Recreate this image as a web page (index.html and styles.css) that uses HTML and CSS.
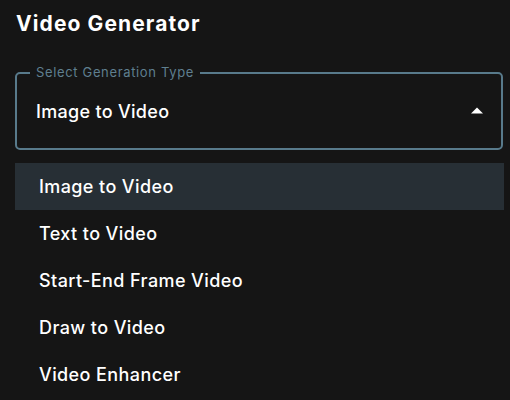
FILE: index.html
```html
<!DOCTYPE html>
<html lang="en">
<head>
<meta charset="utf-8">
<title>Video Generator</title>
<link rel="stylesheet" href="styles.css">
</head>
<body>
<div class="panel">
  <h1 class="title">Video Generator</h1>
  <div class="field">
    <span class="field-label">Select Generation Type</span>
    <span class="field-value">Image to Video</span>
    <svg class="arrow" viewBox="0 0 24 24" width="24" height="24" aria-hidden="true"><path d="M6 14.5l6-6 6 6z" fill="#ffffff"/></svg>
  </div>
  <ul class="menu">
    <li class="menu-item selected">Image to Video</li>
    <li class="menu-item">Text to Video</li>
    <li class="menu-item">Start-End Frame Video</li>
    <li class="menu-item">Draw to Video</li>
    <li class="menu-item">Video Enhancer</li>
  </ul>
</div>
</body>
</html>
```
FILE: styles.css
```css
html, body {
  margin: 0;
  padding: 0;
  background: #151515;
  color: #ffffff;
  font-family: Inter, "Noto Sans", sans-serif;
}

.panel {
  padding: 0 6px 0 15px;
}

.title {
  margin: 11px 0 0 1px;
  font-size: 21px;
  line-height: 26px;
  font-weight: 700;
  letter-spacing: 1.1px;
}

.field {
  position: relative;
  margin-top: 35px;
  width: 488px;
  height: 78px;
  box-sizing: border-box;
  border: 2px solid #587a8b;
  border-radius: 5px;
  display: flex;
  align-items: center;
  justify-content: space-between;
  padding: 0 12px 0 19px;
}

.field-label {
  position: absolute;
  top: -10px;
  left: 13px;
  padding: 0 6px;
  background: #151515;
  color: #5f7f8f;
  font-size: 13px;
  line-height: 16px;
  letter-spacing: 0.65px;
}

.field-value {
  font-size: 18px;
  font-weight: 500;
  line-height: 22px;
  margin-top: 2px;
  letter-spacing: 0.3px;
}

.arrow {
  display: block;
}

.menu {
  list-style: none;
  margin: 13px 0 0 0;
  padding: 0;
  width: 489px;
}

.menu-item {
  height: 47px;
  display: flex;
  align-items: center;
  padding-left: 24px;
  font-size: 18px;
  font-weight: 500;
  line-height: 22px;
  letter-spacing: 0.4px;
}

.menu-item.selected {
  background: #272f35;
}
```
